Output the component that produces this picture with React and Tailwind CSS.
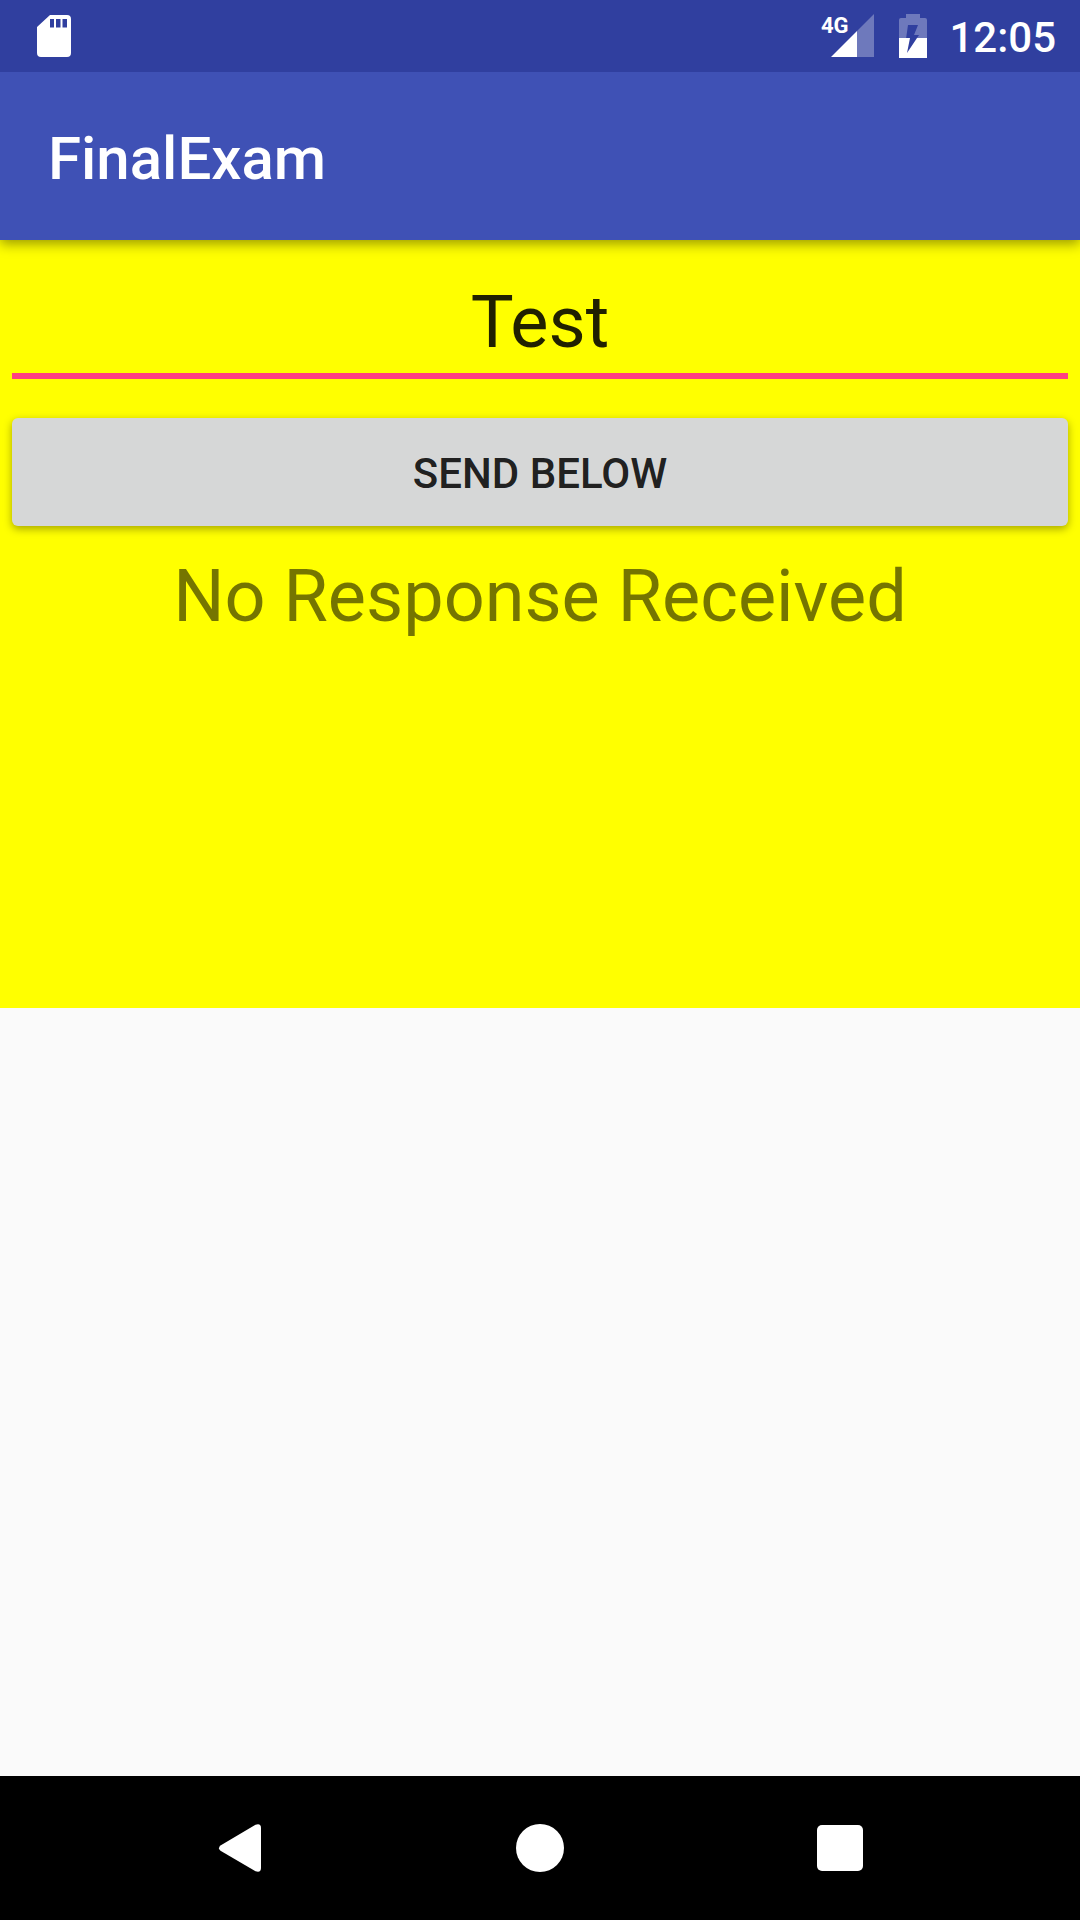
function SdCardIcon() {
  return (
    <svg viewBox="0 0 36 44" className="h-11 w-9" fill="currentColor" aria-hidden="true">
      <path
        fillRule="evenodd"
        d="M14 1H31Q35 1 35 5V39Q35 43 31 43H5Q1 43 1 39V13ZM14 5v8.500h4V5zM20 5v8.500h4.500V5zM26.500 5v8.500h4.500V5z"
      />
    </svg>
  );
}

function SignalIcon() {
  return (
    <svg viewBox="0 -6 56 56" className="size-14" fill="currentColor" role="img" aria-label="4G signal">
      <path d="M53 0V43H36V17Z" opacity=".3" />
      <path d="M36 17V43H10Z" />
      <text x="0" y="19" fontSize="22" fontWeight="700" fontFamily="Roboto, sans-serif">
        4G
      </text>
    </svg>
  );
}

function BatteryIcon() {
  return (
    <svg viewBox="0 0 28 44" className="h-11 w-7" fill="currentColor" role="img" aria-label="Battery charging">
      <path
        fillRule="evenodd"
        opacity=".3"
        d="M7 0H21V4H26Q28 4 28 6V24H18L20 21H15L19 11H9L7 25H0V6Q0 4 2 4H7Z"
      />
      <path d="M0 24H11L8 39L18 24H28V44H0Z" />
    </svg>
  );
}

function NavButton({ label, children }) {
  return (
    <button type="button" aria-label={label} className="flex h-full w-60 items-center justify-center">
      <svg viewBox="0 0 48 48" className="size-12" fill="currentColor" aria-hidden="true">
        {children}
      </svg>
    </button>
  );
}

export default function App() {
  return (
    <div className="flex min-h-screen flex-col bg-[#fafafa] font-[Roboto,sans-serif]">
      <div className="z-20 flex h-[72px] items-center justify-between bg-[#303f9f] pl-9 pr-6 text-white">
        <SdCardIcon />
        <div className="flex items-center gap-[22px]">
          <SignalIcon />
          <BatteryIcon />
          <time className="pt-[3px] text-[42px] font-medium leading-[48px]">12:05</time>
        </div>
      </div>
      <header className="z-10 flex h-[168px] items-center bg-[#3f51b5] px-12 pt-[6px] text-white shadow-[0_4px_12px_rgba(0,0,0,0.4)]">
        <h1 className="text-[60px] font-medium">FinalExam</h1>
      </header>
      <main className="grid flex-1 grid-rows-2">
        <section className="flex flex-col bg-[#ff0] px-3 pt-9">
          <input
            aria-label="Message"
            defaultValue="Test"
            className="h-[103px] w-full border-b-[6px] border-[#ff4081] pb-1 text-center text-[72px] text-black/87 outline-none"
          />
          <button
            type="button"
            className="mt-[39px] h-[108px] rounded-[6px] bg-[#d6d7d7] pt-[2px] text-[42px] font-medium text-black/87 shadow-[0_3px_8px_rgba(0,0,0,0.35)]"
          >
            SEND BELOW
          </button>
          <p className="mt-[23px] text-center text-[72px] leading-[96px] text-black/54">No Response Received</p>
        </section>
      </main>
      <nav className="flex h-36 items-center justify-center gap-[60px] bg-black text-white">
        <NavButton label="Back">
          <path d="M4.500 21.500 39.500 .8Q45 -1 45 4V44Q45 49 39.500 47.200L4.500 26.800Q1.500 24.200 4.500 21.500Z" />
        </NavButton>
        <NavButton label="Home">
          <circle cx="24" cy="24" r="24" />
        </NavButton>
        <NavButton label="Overview">
          <rect x="1" y="1" width="46" height="46" rx="5" />
        </NavButton>
      </nav>
    </div>
  );
}
